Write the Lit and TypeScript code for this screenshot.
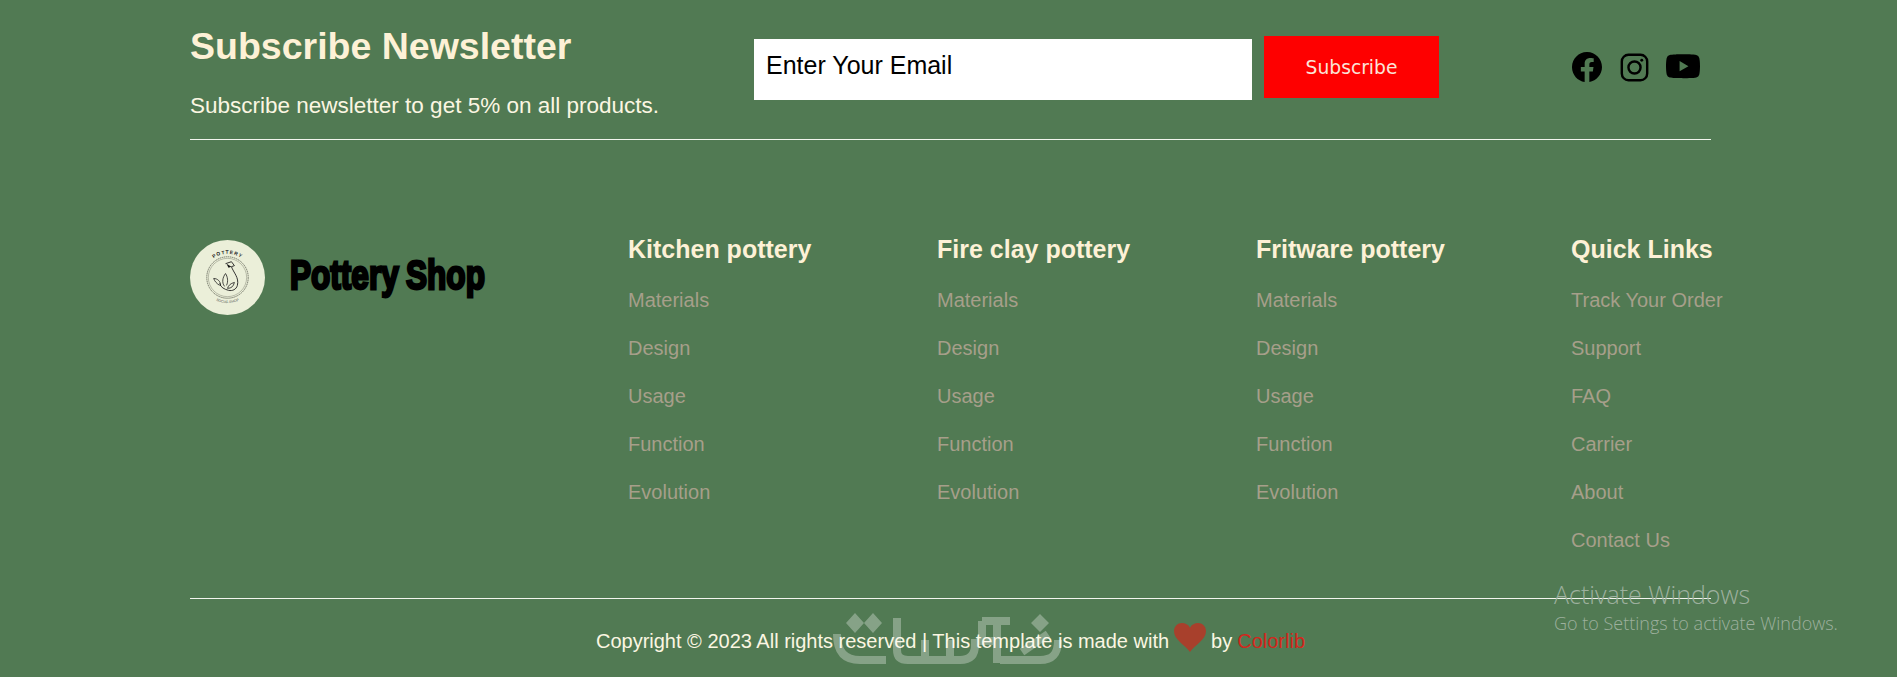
import { LitElement, html, css } from "lit";
import { customElement } from "lit/decorators.js";

const columns = [
  { title: "Kitchen pottery", width: 309, links: ["Materials", "Design", "Usage", "Function", "Evolution"] },
  { title: "Fire clay pottery", width: 319, links: ["Materials", "Design", "Usage", "Function", "Evolution"] },
  { title: "Fritware pottery", width: 315, links: ["Materials", "Design", "Usage", "Function", "Evolution"] },
  { title: "Quick Links", width: 140, links: ["Track Your Order", "Support", "FAQ", "Carrier", "About", "Contact Us"] },
];

@customElement("app-root")
export class AppRoot extends LitElement {
  static styles = css`
    :host {
      display: block;
      position: relative;
      height: 677px;
      overflow: hidden;
      background: #517a53;
      font-family: "Liberation Sans", Arial, sans-serif;
      color: #fdf1d6;
    }
    .wrap {
      margin-left: 190px;
      width: 1521px;
    }
    .top {
      display: flex;
      height: 139px;
      border-bottom: 1px solid #f2f5ee;
      box-sizing: content-box;
    }
    .intro {
      width: 564px;
    }
    .intro h2 {
      margin: 24px 0 0;
      font-size: 37.5px;
      line-height: 45px;
      font-weight: 700;
    }
    .intro p {
      margin: 23px 0 0;
      font-size: 22.5px;
      line-height: 27px;
      color: #fbf6e2;
    }
    .form {
      display: flex;
      align-items: flex-start;
      gap: 12px;
      width: 818px;
    }
    .email {
      margin-top: 39px;
      width: 498px;
      height: 61px;
      box-sizing: border-box;
      padding: 12px 12px;
      background: #fff;
      color: #000;
      font-size: 25px;
      line-height: 29px;
    }
    .subscribe {
      margin-top: 36px;
      width: 175px;
      height: 62px;
      border: none;
      background: #fe0000;
      color: #fbe4d8;
      font-family: "DejaVu Sans", Verdana, sans-serif;
      font-size: 18.7px;
    }
    .social {
      display: flex;
      align-items: center;
      gap: 18px;
      height: 58px;
      margin-top: 38px;
    }
    .main {
      display: flex;
      height: 458px;
      border-bottom: 1px solid #f2f5ee;
    }
    .brand {
      display: flex;
      align-items: flex-start;
      gap: 25px;
      width: 438px;
      padding-top: 100px;
    }
    .mark {
      width: 75px;
      height: 75px;
      flex: none;
    }
    .name {
      margin-top: 11px;
      font-size: 41px;
      line-height: 48px;
      font-weight: 700;
      color: #000;
      white-space: nowrap;
      word-spacing: -2px;
      -webkit-text-stroke: 2.8px #000;
      transform: scaleX(0.77);
      transform-origin: left center;
    }
    .col {
      padding-top: 94px;
    }
    .col h4 {
      margin: 0 0 22px;
      font-size: 25px;
      line-height: 30px;
      font-weight: 700;
      white-space: nowrap;
    }
    .col a {
      display: block;
      height: 48.1px;
      font-size: 20px;
      line-height: 24px;
      padding-top: 2px;
      box-sizing: border-box;
      color: #a69f8a;
      white-space: nowrap;
    }
    .copy {
      display: flex;
      justify-content: center;
      align-items: center;
      height: 78px;
      padding-top: 7px;
      box-sizing: border-box;
      margin-left: 0;
      font-size: 20px;
      color: #fbf6e2;
      white-space: nowrap;
    }
    .copy svg {
      margin: 0 5px;
      position: relative;
      top: -4px;
    }
    .copy a {
      color: #d3261c;
      margin-left: 5px;
    }
    .watermark {
      position: absolute;
      left: 825px;
      top: 605px;
      width: 245px;
      height: 65px;
      opacity: 0.3;
      pointer-events: none;
    }
    .activate {
      position: absolute;
      left: 1554px;
      top: 578px;
      color: #9db09e;
      font-family: "Open Sans", sans-serif;
      font-weight: 300;
      pointer-events: none;
    }
    .activate b {
      display: block;
      font-weight: 300;
      font-size: 25px;
      line-height: 32px;
    }
    .activate span {
      display: block;
      font-size: 18px;
      line-height: 26px;
    }
  `;

  private renderLogo() {
    return html`<svg class="mark" viewBox="0 0 76 76">
      <circle cx="38" cy="38" r="38" fill="#ebefd9"></circle>
      <defs>
        <path id="arcTop" d="M14 38a24 24 0 0 1 48 0"></path>
        <path id="arcBottom" d="M12 38a26 26 0 0 0 52 0"></path>
      </defs>
      <circle cx="38" cy="38" r="21" fill="none" stroke="#45473c" stroke-width=".7" stroke-dasharray="1.5 .6"></circle>
      <circle cx="38" cy="38" r="19.4" fill="none" stroke="#65685a" stroke-width=".4"></circle>
      <text font-family="Liberation Sans" font-size="5" font-weight="700" letter-spacing="1" fill="#222">
        <textPath href="#arcTop" startOffset="50%" text-anchor="middle">POTTERY</textPath>
      </text>
      <text font-family="Liberation Sans" font-size="3.6" fill="#555">
        <textPath href="#arcBottom" startOffset="50%" text-anchor="middle">SOCIAL SHOP</textPath>
      </text>
      <path d="M36 24l6-2 3 4-3 1c2 6 8 11 6 19-1 4-5 6-9 5-4-1-8-3-9-7" fill="none" stroke="#1c1c1c" stroke-width=".9"></path>
      <path d="M37 24l5 3-3 1z" fill="#111"></path>
      <path d="M35 47c-3-4-2-9 1-13 2 3 3 8 1 12M30 46c-3-2-5-4-6-7 4 0 7 3 7 7M38 49c1-3 3-5 7-6-1 4-3 6-7 6" fill="none" stroke="#1c1c1c" stroke-width=".8"></path>
    </svg>`;
  }

  private renderSocial() {
    return html`
      <svg width="30" height="30" viewBox="0 0 16 16" fill="#000">
        <path d="M16 8.049c0-4.446-3.582-8.05-8-8.05C3.58 0-.002 3.603-.002 8.05c0 4.017 2.926 7.347 6.75 7.951v-5.625h-2.03V8.05H6.75V6.275c0-2.017 1.195-3.131 3.022-3.131.876 0 1.791.157 1.791.157v1.98h-1.009c-.993 0-1.303.621-1.303 1.258v1.51h2.218l-.354 2.326H9.25V16c3.824-.604 6.75-3.934 6.75-7.951z"></path>
      </svg>
      <svg width="29" height="29" viewBox="0 0 24 24" fill="none" stroke="#000" stroke-width="2">
        <rect x="1.5" y="1.5" width="21" height="21" rx="5.5"></rect>
        <circle cx="12" cy="12" r="5"></circle>
        <circle cx="18" cy="6" r="1.2" fill="#000" stroke="none"></circle>
      </svg>
      <svg width="34" height="34" viewBox="0 0 16 16" fill="#000" style="margin-left: -1px">
        <path d="M8.051 1.999h.089c.822.003 4.987.033 6.11.335a2.01 2.01 0 0 1 1.415 1.42c.101.38.172.883.22 1.402l.01.104.022.26.008.104c.065.914.073 1.77.074 1.957v.075c-.001.194-.01 1.108-.082 2.06l-.008.105-.009.104c-.05.572-.124 1.14-.235 1.558a2.007 2.007 0 0 1-1.415 1.42c-1.16.312-5.569.334-6.18.335h-.142c-.309 0-1.587-.006-2.927-.052l-.17-.006-.087-.004-.171-.007-.171-.007c-1.11-.049-2.167-.128-2.654-.26a2.007 2.007 0 0 1-1.415-1.419c-.111-.417-.185-.986-.235-1.558L.09 9.82l-.008-.104A31.4 31.4 0 0 1 0 7.68v-.123c.002-.215.01-.958.064-1.778l.007-.103.003-.052.008-.104.022-.26.01-.104c.048-.519.119-1.023.22-1.402a2.007 2.007 0 0 1 1.415-1.42c.487-.13 1.544-.21 2.654-.26l.17-.007.172-.006.086-.003.171-.007A99.788 99.788 0 0 1 7.858 2h.193zM6.4 5.209v4.818l4.157-2.408L6.4 5.209z"></path>
      </svg>
    `;
  }

  render() {
    return html`
      <div class="wrap">
        <div class="top">
          <div class="intro">
            <h2>Subscribe Newsletter</h2>
            <p>Subscribe newsletter to get 5% on all products.</p>
          </div>
          <div class="form">
            <div class="email">Enter Your Email</div>
            <button class="subscribe">Subscribe</button>
          </div>
          <div class="social">${this.renderSocial()}</div>
        </div>
        <div class="main">
          <div class="brand">
            ${this.renderLogo()}
            <div class="name">Pottery Shop</div>
          </div>
          ${columns.map(
            (col) => html`<div class="col" style="width: ${col.width}px">
              <h4>${col.title}</h4>
              ${col.links.map((link) => html`<a>${link}</a>`)}
            </div>`
          )}
        </div>
        <div class="copy">
          Copyright © 2023 All rights reserved | This template is made with
          <svg width="32" height="29" viewBox="0 0 30 28" fill="#a8402c" preserveAspectRatio="none">
            <path d="M15 28C10 21 0 16 0 8c0-5 3.500-8 7.500-8 3 0 6 1.500 7.500 4.500C16.500 1.500 19.500 0 22.500 0 26.500 0 30 3 30 8c0 8-10 13-15 20z"></path>
          </svg>
          by <a>Colorlib</a>
        </div>
      </div>
      <!-- same units as the page, so the strokes read off the reference directly -->
      <svg class="watermark" viewBox="825 605 245 65" fill="none" stroke="#fff" stroke-width="8">
        <path d="M837 634c0 18 8 26 23 26h26"></path>
        <path d="M897 618v32c0 7 4 10 11 10h52c10 0 15-5 15-15v-6"></path>
        <path d="M925 640v18M950 640v18"></path>
        <path d="M982 621h28M982 621v20h14M997 621v42"></path>
        <path d="M1000 660h40c12 0 18-5 18-20"></path>
        <path d="M1022 652l26-18"></path>
        <path fill="#fff" stroke="none" d="M855 613l9 10-9 10-9-10zM873 613l9 10-9 10-9-10zM1040 614l9 9-9 9-9-9z"></path>
      </svg>
      <div class="activate"><b>Activate Windows</b><span>Go to Settings to activate Windows.</span></div>
    `;
  }
}
